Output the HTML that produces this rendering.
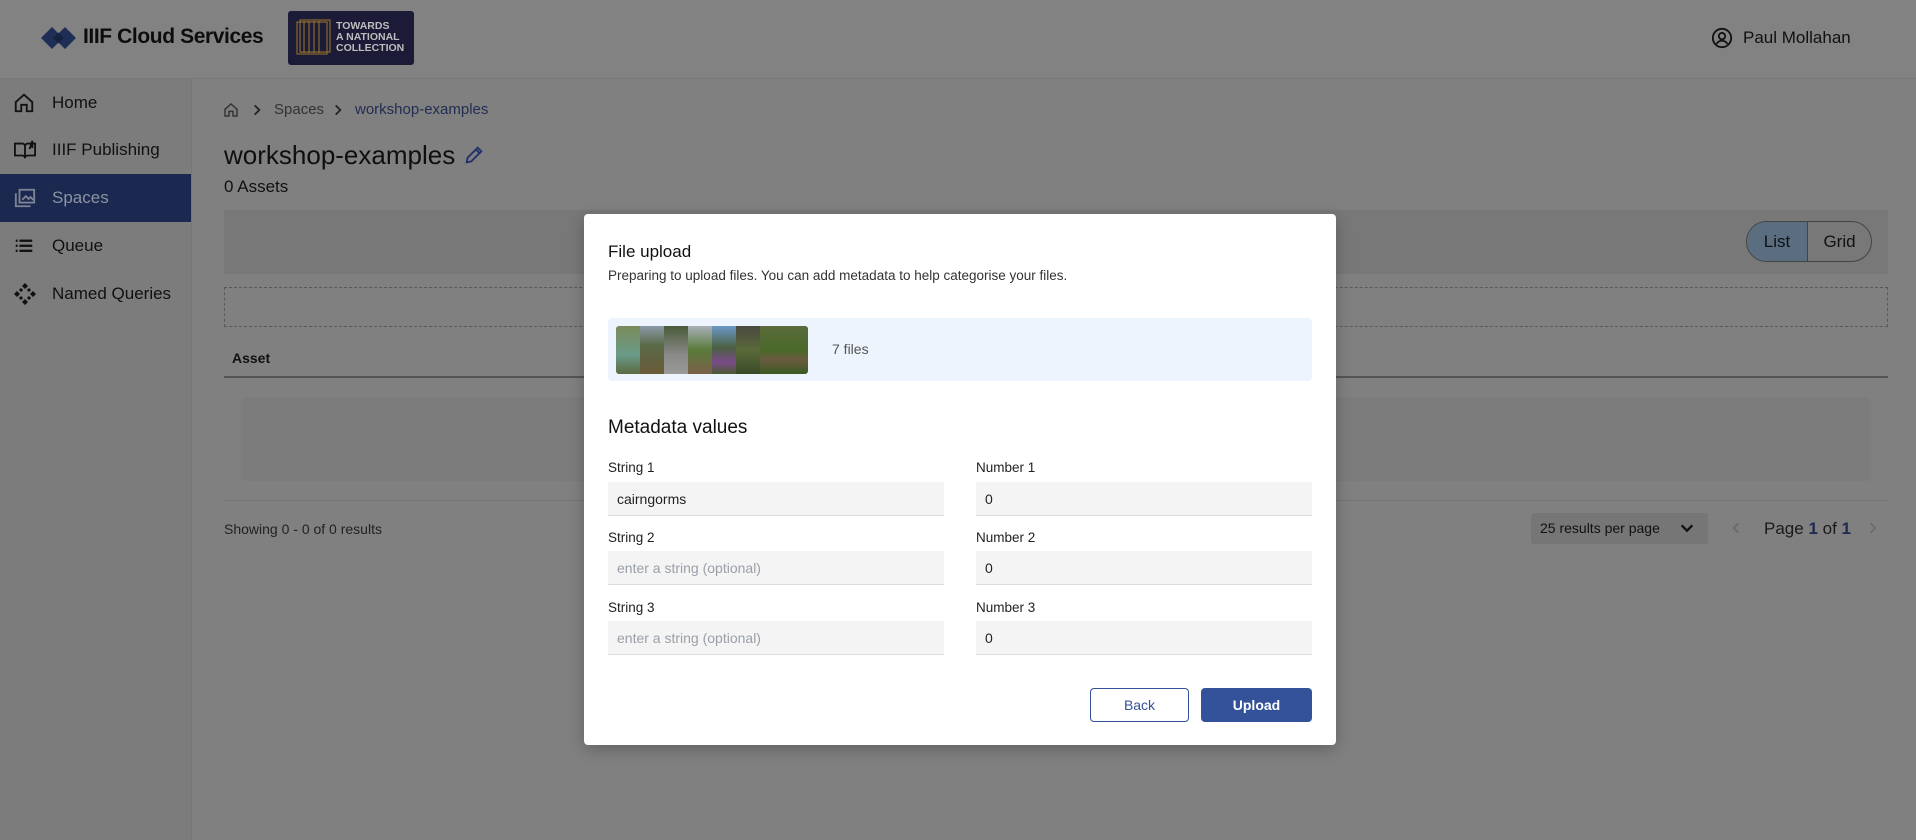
<!DOCTYPE html>
<html><head><meta charset="utf-8"><style>
*{box-sizing:border-box;margin:0;padding:0}
body{width:1916px;height:840px;overflow:hidden;background:#808080;font-family:"Liberation Sans",sans-serif;color:#111;position:relative}
.abs{position:absolute}
.hdr{left:0;top:0;width:1916px;height:79px;background:#828282;border-bottom:1px solid #777}
.side{left:0;top:79px;width:192px;height:761px;background:#7c7c7c;border-right:1px solid #767676}
.nav{position:absolute;left:0;width:191px;height:48px;display:flex;align-items:center;font-size:17px;color:#111}
.nav span{position:absolute;left:52px}
.nav svg{position:absolute;left:13px}
.inp{position:absolute;height:34px;background:#f4f4f4;border-bottom:1px solid #ddd;font-size:14px;padding-left:9px;line-height:34px;color:#222}
.ph{color:#9aa0a8}
.lbl{position:absolute;font-size:13.5px;color:#222}
</style></head><body>
<div class="abs hdr"></div>
<svg class="abs" style="left:40px;top:26px" width="38" height="24" viewBox="0 0 38 24"><path d="M12 1 L23 12 L12 23 L1 12 Z" fill="#1e2e57"/><path d="M25 1 L36 12 L25 23 L14 12 Z" fill="#1e2e57"/><path d="M18.5 6.5 L24 12 L18.5 17.5 L13 12Z" fill="#152240"/></svg>
<div class="abs" style="left:83px;top:25px;font-size:21px;font-weight:bold;color:#0d0d0d;letter-spacing:-0.4px">IIIF Cloud Services</div>
<div class="abs" style="left:288px;top:11px;width:126px;height:54px;background:#1b1b37;border-radius:3px">
<svg class="abs" style="left:7px;top:7px" width="38" height="40" viewBox="0 0 38 40"><g fill="none" stroke="#8a6a2e" stroke-width="1.2"><rect x="2" y="4" width="30" height="32"/><rect x="5" y="2" width="30" height="32"/><line x1="9" y1="3" x2="9" y2="35"/><line x1="14" y1="3" x2="14" y2="35"/><line x1="19" y1="3" x2="19" y2="35"/><line x1="24" y1="3" x2="24" y2="35"/></g></svg>
<div class="abs" style="left:48px;top:10px;font-size:10.5px;line-height:11px;font-weight:bold;color:#bdbdbd">TOWARDS<br>A NATIONAL<br>COLLECTION</div>
</div>
<svg class="abs" style="left:1711px;top:27px" width="22" height="22" viewBox="0 0 24 24" fill="none" stroke="#111" stroke-width="2"><circle cx="12" cy="12" r="10"/><circle cx="12" cy="10" r="3.5"/><path d="M6 18.5c1.5-2.5 3.5-3.5 6-3.5s4.5 1 6 3.5"/></svg>
<div class="abs" style="left:1743px;top:28px;font-size:17px;color:#111">Paul Mollahan</div>

<div class="abs side"></div>
<div class="nav" style="top:79px"><svg width="22" height="22" viewBox="0 0 24 24" fill="none" stroke="#111" stroke-width="2"><path d="M3 11 L12 3 L21 11 V21 H15 V14 H9 V21 H3Z"/></svg><span>Home</span></div>
<div class="nav" style="top:126px"><svg width="24" height="22" viewBox="0 0 24 24" fill="none" stroke="#111" stroke-width="2"><path d="M1 5h8a3 3 0 013 3v13a3 3 0 00-3-3H1z M23 5h-8a3 3 0 00-3 3v13a3 3 0 013-3h8z"/><path d="M17 11 L20 2 V10" /></svg><span>IIIF Publishing</span></div>
<div class="nav" style="top:174px;background:#1b284f;color:#8d93a3"><svg width="24" height="22" viewBox="0 0 24 24" fill="none" stroke="#7d8496" stroke-width="2"><rect x="6" y="3" width="16" height="14"/><path d="M2 7v14h16"/><path d="M9 14l4-4 3 3 2-2 3 3" /></svg><span>Spaces</span></div>
<div class="nav" style="top:222px"><svg width="22" height="22" viewBox="0 0 24 24" fill="#111"><rect x="3" y="5" width="2" height="2.5"/><rect x="7" y="5" width="14" height="2.5"/><rect x="3" y="10.5" width="2" height="2.5"/><rect x="7" y="10.5" width="14" height="2.5"/><rect x="3" y="16" width="2" height="2.5"/><rect x="7" y="16" width="14" height="2.5"/></svg><span>Queue</span></div>
<div class="nav" style="top:270px"><svg width="24" height="24" viewBox="0 0 24 24" fill="#111"><path d="M12 1l3 3-3 3-3-3z M12 17l3 3-3 3-3-3z M1 12l3-3 3 3-3 3z M17 12l3-3 3 3-3 3z"/><circle cx="8" cy="8" r="1.6"/><circle cx="16" cy="8" r="1.6"/><circle cx="8" cy="16" r="1.6"/><circle cx="16" cy="16" r="1.6"/></svg><span>Named Queries</span></div>

<svg class="abs" style="left:223px;top:102px" width="16" height="16" viewBox="0 0 24 24" fill="none" stroke="#333" stroke-width="2.2"><path d="M3 11 L12 3 L21 11 V21 H15 V14 H9 V21 H3Z"/></svg>
<svg class="abs" style="left:250px;top:103px" width="14" height="14" viewBox="0 0 24 24" fill="none" stroke="#222" stroke-width="3"><path d="M8 4l8 8-8 8"/></svg>
<div class="abs" style="left:274px;top:101px;font-size:15px;color:#333">Spaces</div>
<svg class="abs" style="left:331px;top:103px" width="14" height="14" viewBox="0 0 24 24" fill="none" stroke="#222" stroke-width="3"><path d="M8 4l8 8-8 8"/></svg>
<div class="abs" style="left:355px;top:101px;font-size:15px;color:#222d52">workshop-examples</div>
<div class="abs" style="left:224px;top:140px;font-size:26px;color:#0f0f0f">workshop-examples</div>
<svg class="abs" style="left:463px;top:144px" width="22" height="22" viewBox="0 0 24 24" fill="none" stroke="#22306a" stroke-width="2"><path d="M4 20l1-5L16 4l4 4L9 19z M14 6l4 4"/></svg>
<div class="abs" style="left:224px;top:177px;font-size:17px;color:#111">0 Assets</div>
<div class="abs" style="left:224px;top:210px;width:1664px;height:64px;background:#787878"></div>
<div class="abs" style="left:1746px;top:221px;width:126px;height:41px;border:1px solid #444;border-radius:21px;overflow:hidden;display:flex;font-size:17px">
<div style="width:61px;background:#5a6e80;border-right:1px solid #444;text-align:center;line-height:39px">List</div>
<div style="flex:1;text-align:center;line-height:39px">Grid</div></div>
<div class="abs" style="left:224px;top:287px;width:1664px;height:40px;border:1px dashed #5a5a5a"></div>
<div class="abs" style="left:232px;top:350px;font-size:14px;font-weight:bold;color:#111">Asset</div>
<div class="abs" style="left:224px;top:376px;width:1664px;height:2px;background:#555"></div>
<div class="abs" style="left:241px;top:397px;width:1630px;height:84px;background:#7c7c7c;border-radius:4px"></div>
<div class="abs" style="left:224px;top:500px;width:1664px;height:1px;background:#747474"></div>
<div class="abs" style="left:224px;top:521px;font-size:14px;color:#222">Showing 0 - 0 of 0 results</div>
<div class="abs" style="left:1531px;top:513px;width:177px;height:31px;background:#767676;border-radius:3px;font-size:14px;line-height:31px;padding-left:9px;color:#111">25 results per page</div>
<svg class="abs" style="left:1679px;top:520px" width="16" height="16" viewBox="0 0 24 24" fill="none" stroke="#111" stroke-width="3.5"><path d="M4 8l8 8 8-8"/></svg>
<svg class="abs" style="left:1729px;top:521px" width="14" height="14" viewBox="0 0 24 24" fill="none" stroke="#666" stroke-width="2.5"><path d="M16 4l-8 8 8 8"/></svg>
<div class="abs" style="left:1764px;top:519px;font-size:17px;color:#1a1a1a">Page <b style="color:#1e2a50">1</b> of <b style="color:#1e2a50">1</b></div>
<svg class="abs" style="left:1866px;top:521px" width="14" height="14" viewBox="0 0 24 24" fill="none" stroke="#666" stroke-width="2.5"><path d="M8 4l8 8-8 8"/></svg>

<div class="abs" style="left:584px;top:214px;width:752px;height:531px;background:#fff;border-radius:4px;box-shadow:0 4px 16px rgba(0,0,0,.25)">
<div class="abs" style="left:24px;top:28px;font-size:17px;color:#111">File upload</div>
<div class="abs" style="left:24px;top:54px;font-size:13.5px;color:#333">Preparing to upload files. You can add metadata to help categorise your files.</div>
<div class="abs" style="left:24px;top:104px;width:704px;height:63px;background:#edf4fd;border-radius:4px">
<div class="abs" style="left:8px;top:8px;width:192px;height:48px;border-radius:3px;overflow:hidden;display:flex">
<div style="width:24px;background:linear-gradient(180deg,#7a8a5a,#6a9a88 60%,#5a6a40)"></div>
<div style="width:24px;background:linear-gradient(180deg,#8a9aa8,#5a6a48 40%,#6a5a38)"></div>
<div style="width:24px;background:linear-gradient(180deg,#4a5a3a,#8a8a88 60%,#9a9a98)"></div>
<div style="width:24px;background:linear-gradient(180deg,#a8b0b8,#5a7a3a 50%,#7a6048)"></div>
<div style="width:24px;background:linear-gradient(180deg,#6a98c8,#4a6040 45%,#7a4a8a 75%,#4a5a30)"></div>
<div style="width:24px;background:linear-gradient(180deg,#4a4840,#5a6a3a 50%,#3a4a28)"></div>
<div style="width:48px;background:linear-gradient(180deg,#5a6a3a,#4a6a2a 50%,#6a5a40 70%,#3a5a20)"></div>
</div>
<div class="abs" style="left:224px;top:23px;font-size:14px;color:#555">7 files</div>
</div>
<div class="abs" style="left:24px;top:203px;font-size:19px;color:#111">Metadata values</div>
<div class="lbl" style="left:24px;top:246px">String 1</div>
<div class="lbl" style="left:392px;top:246px">Number 1</div>
<div class="inp" style="left:24px;top:268px;width:336px">cairngorms</div>
<div class="inp" style="left:392px;top:268px;width:336px">0</div>
<div class="lbl" style="left:24px;top:316px">String 2</div>
<div class="lbl" style="left:392px;top:316px">Number 2</div>
<div class="inp ph" style="left:24px;top:337px;width:336px">enter a string (optional)</div>
<div class="inp" style="left:392px;top:337px;width:336px">0</div>
<div class="lbl" style="left:24px;top:386px">String 3</div>
<div class="lbl" style="left:392px;top:386px">Number 3</div>
<div class="inp ph" style="left:24px;top:407px;width:336px">enter a string (optional)</div>
<div class="inp" style="left:392px;top:407px;width:336px">0</div>
<div class="abs" style="left:506px;top:474px;width:99px;height:34px;border:1px solid #34529a;border-radius:4px;color:#34529a;font-size:14px;text-align:center;line-height:32px">Back</div>
<div class="abs" style="left:617px;top:474px;width:111px;height:34px;background:#34529a;border-radius:4px;color:#fff;font-size:14px;font-weight:bold;text-align:center;line-height:34px">Upload</div>
</div>
</body></html>
